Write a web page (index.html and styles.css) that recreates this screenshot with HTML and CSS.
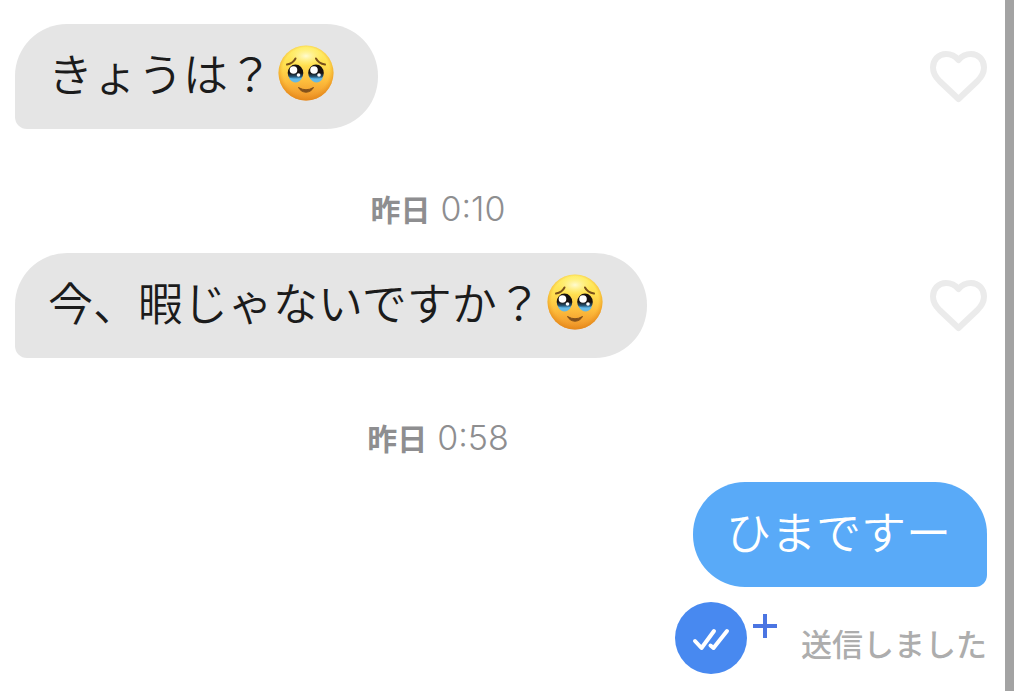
FILE: index.html
```html
<!DOCTYPE html>
<html lang="ja">
<head>
  <meta charset="UTF-8">
  <meta name="viewport" content="width=device-width, initial-scale=1.0">
  <title>メッセージ</title>
  <link rel="stylesheet" href="styles.css">
</head>
<body>
  <svg class="defs" width="0" height="0" aria-hidden="true">
    <defs>
      <linearGradient id="face" x1="0" y1="0" x2="0" y2="1">
        <stop offset="0" stop-color="#fff06a"/>
        <stop offset="0.35" stop-color="#ffe050"/>
        <stop offset="0.65" stop-color="#fdbd3c"/>
        <stop offset="1" stop-color="#ed8e27"/>
      </linearGradient>
      <radialGradient id="rim" cx="0.5" cy="0.46" r="0.54">
        <stop offset="0.78" stop-color="#ef9a20" stop-opacity="0"/>
        <stop offset="1" stop-color="#e08416" stop-opacity="0.75"/>
      </radialGradient>
      <radialGradient id="glow" cx="0.5" cy="0.5" r="0.5">
        <stop offset="0" stop-color="#fffde0" stop-opacity="0.9"/>
        <stop offset="1" stop-color="#fff58a" stop-opacity="0"/>
      </radialGradient>
      <linearGradient id="eye" x1="0" y1="0" x2="0" y2="1">
        <stop offset="0.5" stop-color="#17110f"/>
        <stop offset="0.72" stop-color="#26587a"/>
        <stop offset="0.85" stop-color="#5bb7ea"/>
        <stop offset="1" stop-color="#7cc4e6"/>
      </linearGradient>
      <symbol id="tearful" viewBox="0 0 56 56">
        <circle cx="28" cy="28" r="27.5" fill="url(#face)"/>
        <ellipse cx="28" cy="11" rx="17" ry="10" fill="url(#glow)"/>
        <circle cx="28" cy="28" r="27.5" fill="url(#rim)"/>
        <path d="M9 19.500Q15 18.500 17.500 13.500M38 13.500Q40.500 18.500 47 19.500" fill="none" stroke="#79501a" stroke-width="2" stroke-linecap="round"/>
        <ellipse cx="17.500" cy="28" rx="7.800" ry="8.500" fill="url(#eye)"/>
        <ellipse cx="38" cy="28" rx="7.800" ry="8.500" fill="url(#eye)"/>
        <path d="M11 32.500Q17.500 36 24 32.500Q22 37.500 17 37.500Q13 37 11 32.500ZM32 32.500Q38 36 45 32.500Q43 37 39 37.500Q34 37.500 32 32.500Z" fill="#66b9e5"/>
        <circle cx="15.500" cy="25" r="3.800" fill="#fff"/>
        <circle cx="36" cy="25" r="3.800" fill="#fff"/>
        <circle cx="20.500" cy="30" r="1.800" fill="#fff"/>
        <circle cx="41" cy="30" r="1.800" fill="#fff"/>
        <path d="M20.500 42.500Q28 47 35.500 42.500Q33 47 28 47.200Q23 47 20.500 42.500Z" fill="#82501b" stroke="#82501b" stroke-width="1" stroke-linejoin="round"/>
      </symbol>
      <symbol id="heart" viewBox="0 0 57 52">
        <path d="M28.500 9C25 4.700 20.500 3 16 3C8.500 3 3 9 3 16.500C3 22 5.500 26 9.500 30L28.500 48L47.500 30C51.500 26 54 22 54 16.500C54 9 48.500 3 41 3C36.500 3 32 4.700 28.500 9Z" fill="none" stroke="#ebebeb" stroke-width="6" stroke-linejoin="round"/>
      </symbol>
    </defs>
  </svg>

  <main class="chat">
    <div class="row">
      <p class="bubble received">きょうは？<svg class="emoji" role="img" aria-label="うるうる顔"><use href="#tearful"/></svg></p>
      <button class="like" type="button" aria-label="いいね"><svg><use href="#heart"/></svg></button>
    </div>

    <div class="date"><strong>昨日</strong><time>0:10</time></div>

    <div class="row">
      <p class="bubble received">今、暇じゃないですか？<svg class="emoji" role="img" aria-label="うるうる顔"><use href="#tearful"/></svg></p>
      <button class="like" type="button" aria-label="いいね"><svg><use href="#heart"/></svg></button>
    </div>

    <div class="date"><strong>昨日</strong><time>0:58</time></div>

    <div class="row mine">
      <p class="bubble sent">ひまですー</p>
    </div>

    <div class="status">
      <button class="receipt" type="button" aria-label="既読を確認">
        <svg class="checks" viewBox="0 0 72 72">
          <circle cx="36" cy="36" r="36" fill="#4889f0"/>
          <path d="M20 39L26.500 46L39 29M35.500 43.500L38.500 46L52 29" fill="none" stroke="#fff" stroke-width="4" stroke-linecap="round" stroke-linejoin="round"/>
        </svg>
        <svg class="plus" viewBox="0 0 24 24">
          <path d="M12 0V24M0 12H24" stroke="#4b75e2" stroke-width="4"/>
        </svg>
      </button>
      <span class="sent-label">送信しました</span>
    </div>
  </main>
</body>
</html>
```

FILE: styles.css
```css
* {
  box-sizing: border-box;
}
body {
  margin: 0;
  min-height: 100vh;
  display: flex;
  padding-right: 9px;
  background: #fff;
  font-family: "Noto Sans CJK JP", sans-serif;
}
.defs {
  position: absolute;
}
.chat {
  flex: 1;
  padding: 24px 18px 16px 15px;
  border-right: 9px solid #a3a3a3;
}
.row {
  display: flex;
  align-items: center;
  justify-content: space-between;
}
.mine {
  justify-content: flex-end;
}
.bubble {
  display: flex;
  align-items: center;
  height: 105px;
  margin: 0;
  padding: 0 44px 7px 33px;
  font-size: 45px;
  font-weight: 350;
  line-height: 60px;
}
.received {
  background: #e5e5e5;
  color: #1b1b1b;
  border-radius: 52px 52px 52px 12px;
}
.sent {
  padding-right: 36px;
  background: #59aaf8;
  color: #fff;
  border-radius: 52px 52px 12px 52px;
}
.emoji {
  width: 56px;
  height: 56px;
  margin-left: 5px;
}
button {
  padding: 0;
  border: none;
  background: none;
  cursor: pointer;
}
.like svg {
  display: block;
  width: 57px;
  height: 52px;
}
.date {
  display: flex;
  align-items: center;
  justify-content: center;
  gap: 10px;
  height: 124px;
  padding: 34px 126px 0 0;
  color: #8e8e90;
  font-size: 30px;
}
.date time {
  font-family: Inter, sans-serif;
  font-size: 34px;
  font-weight: 300;
}
.status {
  display: flex;
  align-items: center;
  justify-content: flex-end;
  gap: 24px;
  margin-top: 15px;
}
.receipt {
  display: flex;
  gap: 6px;
}
.checks {
  width: 72px;
  height: 72px;
}
.plus {
  width: 24px;
  height: 24px;
  margin-top: 12px;
}
.sent-label {
  padding-top: 10px;
  color: #adadad;
  font-size: 31px;
  font-weight: 500;
  line-height: 40px;
}
```
